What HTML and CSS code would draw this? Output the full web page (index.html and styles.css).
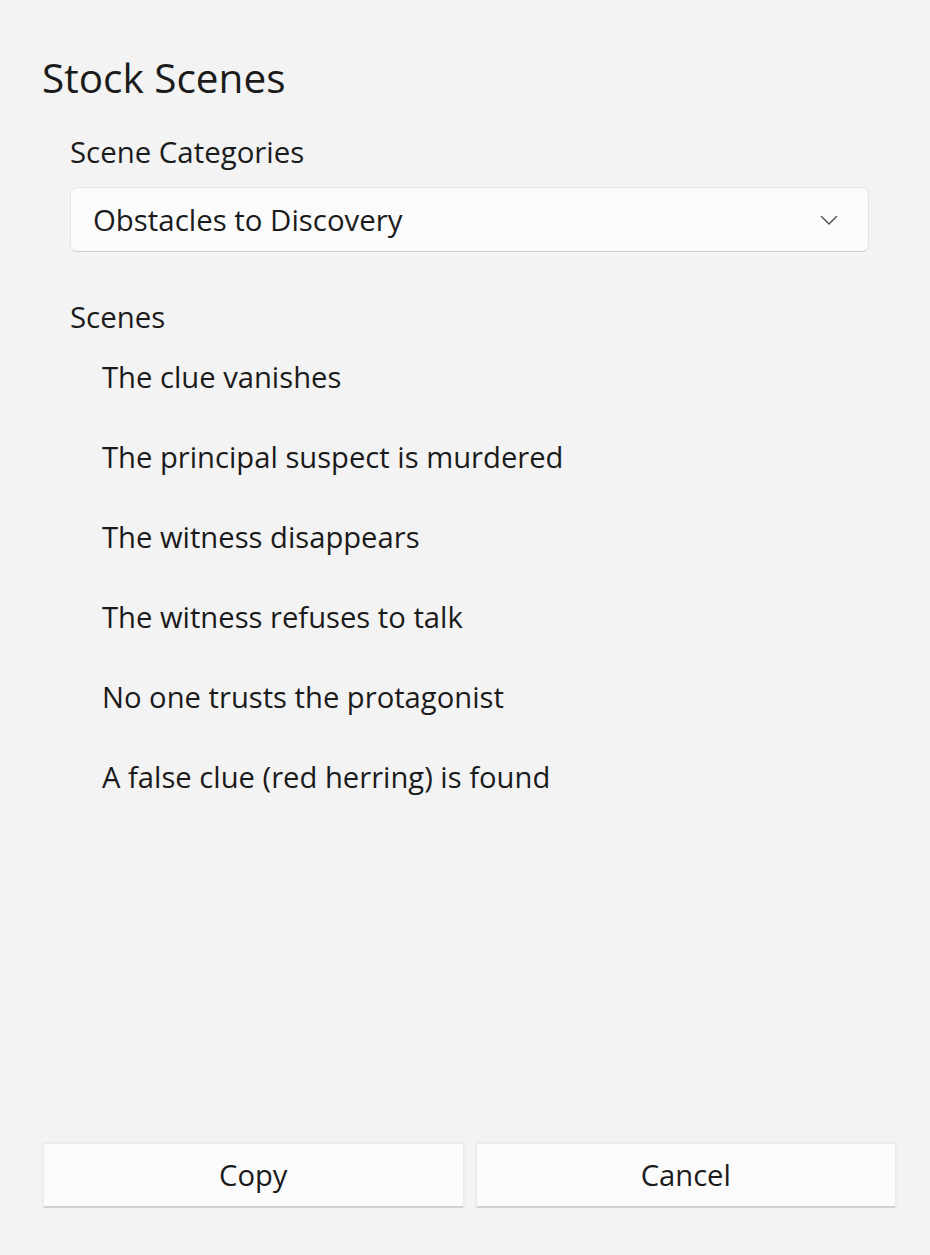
FILE: index.html
```html
<!DOCTYPE html>
<html>
<head>
<meta charset="utf-8">
<link rel="stylesheet" href="styles.css">
</head>
<body>
<div class="dialog">
  <h1 class="title">Stock Scenes</h1>
  <div class="content">
    <div class="label">Scene Categories</div>
    <div class="combo">
      <span class="combo-text">Obstacles to Discovery</span>
      <svg class="chevron" width="18" height="12" viewBox="0 0 18 12"><path d="M1.5 2.5 L9 10 L16.5 2.5" fill="none" stroke="#5c5c5c" stroke-width="1.6" stroke-linecap="round" stroke-linejoin="round"/></svg>
    </div>
    <div class="label scenes-label">Scenes</div>
    <ul class="list">
      <li>The clue vanishes</li>
      <li>The principal suspect is murdered</li>
      <li>The witness disappears</li>
      <li>The witness refuses to talk</li>
      <li>No one trusts the protagonist</li>
      <li>A false clue (red herring) is found</li>
    </ul>
  </div>
  <div class="footer">
    <button class="btn">Copy</button>
    <button class="btn">Cancel</button>
  </div>
</div>
</body>
</html>
```
FILE: styles.css
```css
html, body {
  margin: 0;
  padding: 0;
  background: #f3f3f3;
}
body {
  font-family: "Open Sans", "Noto Sans", sans-serif;
  color: #1b1b1b;
}
.dialog {
  min-height: 100vh;
  box-sizing: border-box;
  display: flex;
  flex-direction: column;
  padding: 50px 33px 47px 42px;
}
.title {
  margin: 0;
  font-size: 40.5px;
  font-weight: 400;
  line-height: 56px;
}
.content {
  padding-left: 28px;
  padding-right: 28px;
}
.label {
  font-size: 29.4px;
  line-height: 40px;
  margin-top: 26px;
}
.combo {
  margin-top: 15px;
  height: 65px;
  box-sizing: border-box;
  background: #fbfbfb;
  border: 1px solid #e5e5e5;
  border-bottom-color: #cfcfcf;
  border-radius: 7px;
  display: flex;
  align-items: center;
  justify-content: space-between;
  padding: 0 30px 0 22px;
}
.combo-text {
  font-size: 29.4px;
}
.scenes-label {
  margin-top: 45px;
}
.list {
  list-style: none;
  margin: 0;
  padding: 0 0 0 32px;
}
.list li {
  font-size: 29.2px;
  line-height: 80px;
  height: 80px;
}
.footer {
  margin-top: auto;
  display: flex;
  gap: 10px;
}
.btn {
  flex: 1;
  height: 66px;
  background: #fbfbfb;
  border: 2px solid #ececec;
  border-bottom-color: #d0d0d0;
  border-radius: 3px;
  font-family: inherit;
  font-size: 29.2px;
  color: #1b1b1b;
  padding: 0;
}
```
